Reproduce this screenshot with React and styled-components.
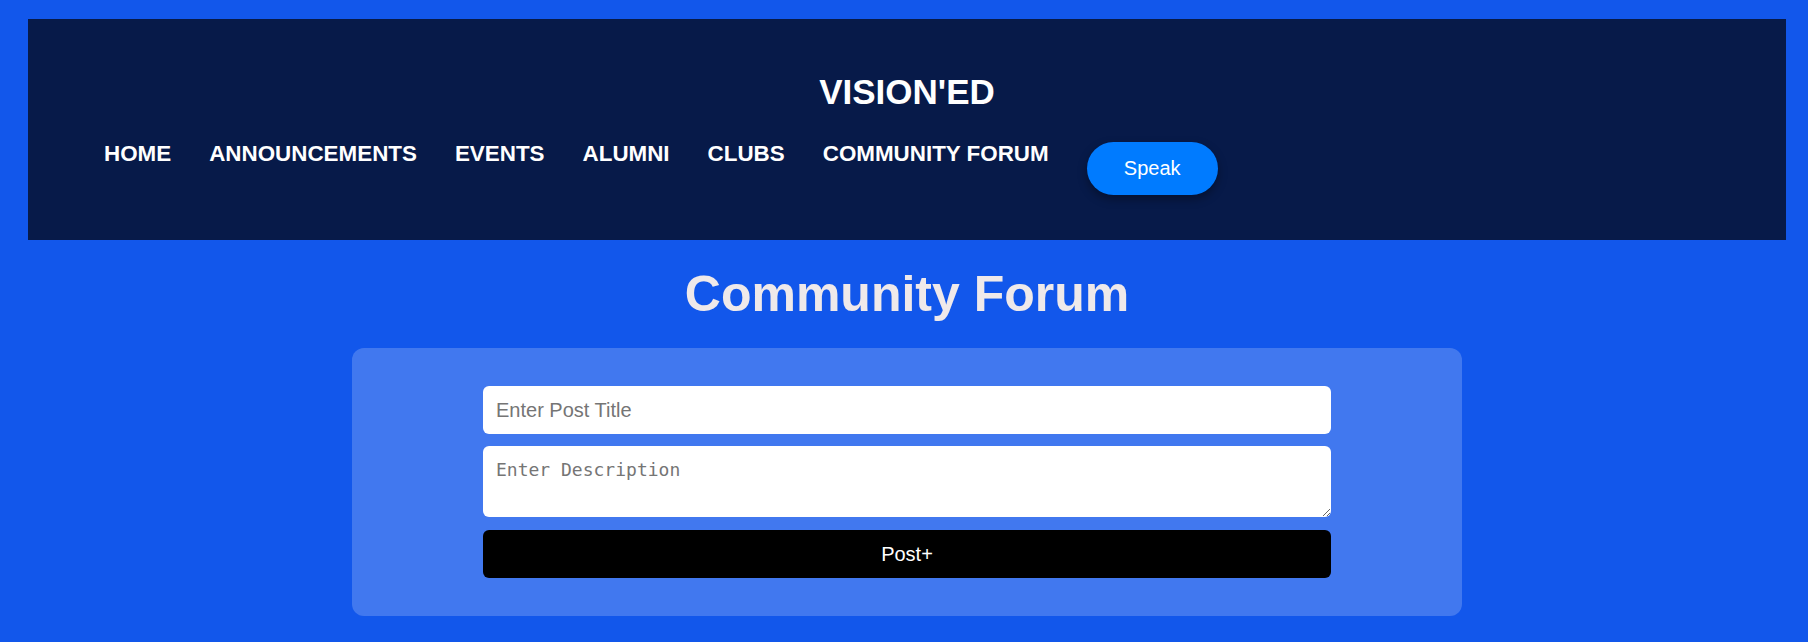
import styled, { createGlobalStyle } from 'styled-components'

const GlobalStyle = createGlobalStyle`
    html,
    body {
        margin: 0;
        background: #1257eb;
    }

    body {
        font-family: "Liberation Sans", Arial, sans-serif;
    }

    * {
        box-sizing: border-box;
    }
`

const Page = styled.div`
    min-height: 642px;
    padding: 19px 22px 0 28px;
`

const Header = styled.header`
    padding: 53px 0 45px;
    background: #071a49;
`

const Brand = styled.h1`
    margin: 0 0 29px;
    color: #fff;
    font-size: 35px;
    font-weight: 700;
    line-height: 40px;
    text-align: center;
`

const Nav = styled.nav`
    display: flex;
    align-items: flex-start;
    gap: 38px;
    padding-left: 76px;
`

const NavLink = styled.a`
    color: #fff;
    font-size: 22.4px;
    font-weight: 700;
    line-height: 26px;
    text-decoration: none;
    white-space: nowrap;
`

const SpeakButton = styled.button`
    width: 131px;
    height: 53px;
    margin-top: 1px;
    padding: 0;
    border: none;
    border-radius: 27px;
    background: #007bff;
    color: #fff;
    font-family: inherit;
    font-size: 20px;
    box-shadow: 0 4px 10px rgba( 0, 0, 0, 0.35 );
    cursor: pointer;
`

const PageTitle = styled.h2`
    margin: 25px 0 25px;
    color: #efe9ea;
    font-size: 50px;
    font-weight: 700;
    line-height: 58px;
    text-align: center;
`

const FormCard = styled.form`
    display: flex;
    width: 1110px;
    margin: 0 auto;
    padding: 38px 0 38px;
    flex-direction: column;
    align-items: center;
    gap: 12px;
    border-radius: 12px;
    background: rgba( 255, 255, 255, 0.2 );
`

const TitleInput = styled.input`
    width: 848px;
    height: 48px;
    padding: 0 13px;
    border: none;
    border-radius: 6px;
    background: #fff;
    font-family: "Liberation Sans", Arial, sans-serif;
    font-size: 20px;
    outline: none;

    &::placeholder {
        color: #757575;
    }
`

const DescriptionInput = styled.textarea`
    display: block;
    width: 848px;
    height: 71px;
    padding: 13px 13px;
    border: none;
    border-radius: 6px;
    background: #fff;
    font-family: "DejaVu Sans Mono", monospace;
    font-size: 18px;
    outline: none;

    &::placeholder {
        color: #757575;
    }
`

const PostButton = styled.button`
    width: 848px;
    height: 48px;
    margin-top: 1px;
    border: none;
    border-radius: 6px;
    background: #000;
    color: #fff;
    font-family: inherit;
    font-size: 20px;
    cursor: pointer;
`

const links = [ `HOME`, `ANNOUNCEMENTS`, `EVENTS`, `ALUMNI`, `CLUBS`, `COMMUNITY FORUM` ]

export default function App() {

    return <>
        <GlobalStyle />
        <Page>
            <Header>
                <Brand>VISION'ED</Brand>
                <Nav>
                    { links.map( link => <NavLink key={ link } href="#">{ link }</NavLink> ) }
                    <SpeakButton type="button">Speak</SpeakButton>
                </Nav>
            </Header>
            <PageTitle>Community Forum</PageTitle>
            <FormCard onSubmit={ e => e.preventDefault() }>
                <TitleInput placeholder="Enter Post Title" />
                <DescriptionInput placeholder="Enter Description" />
                <PostButton type="submit">Post+</PostButton>
            </FormCard>
        </Page>
    </>
}
